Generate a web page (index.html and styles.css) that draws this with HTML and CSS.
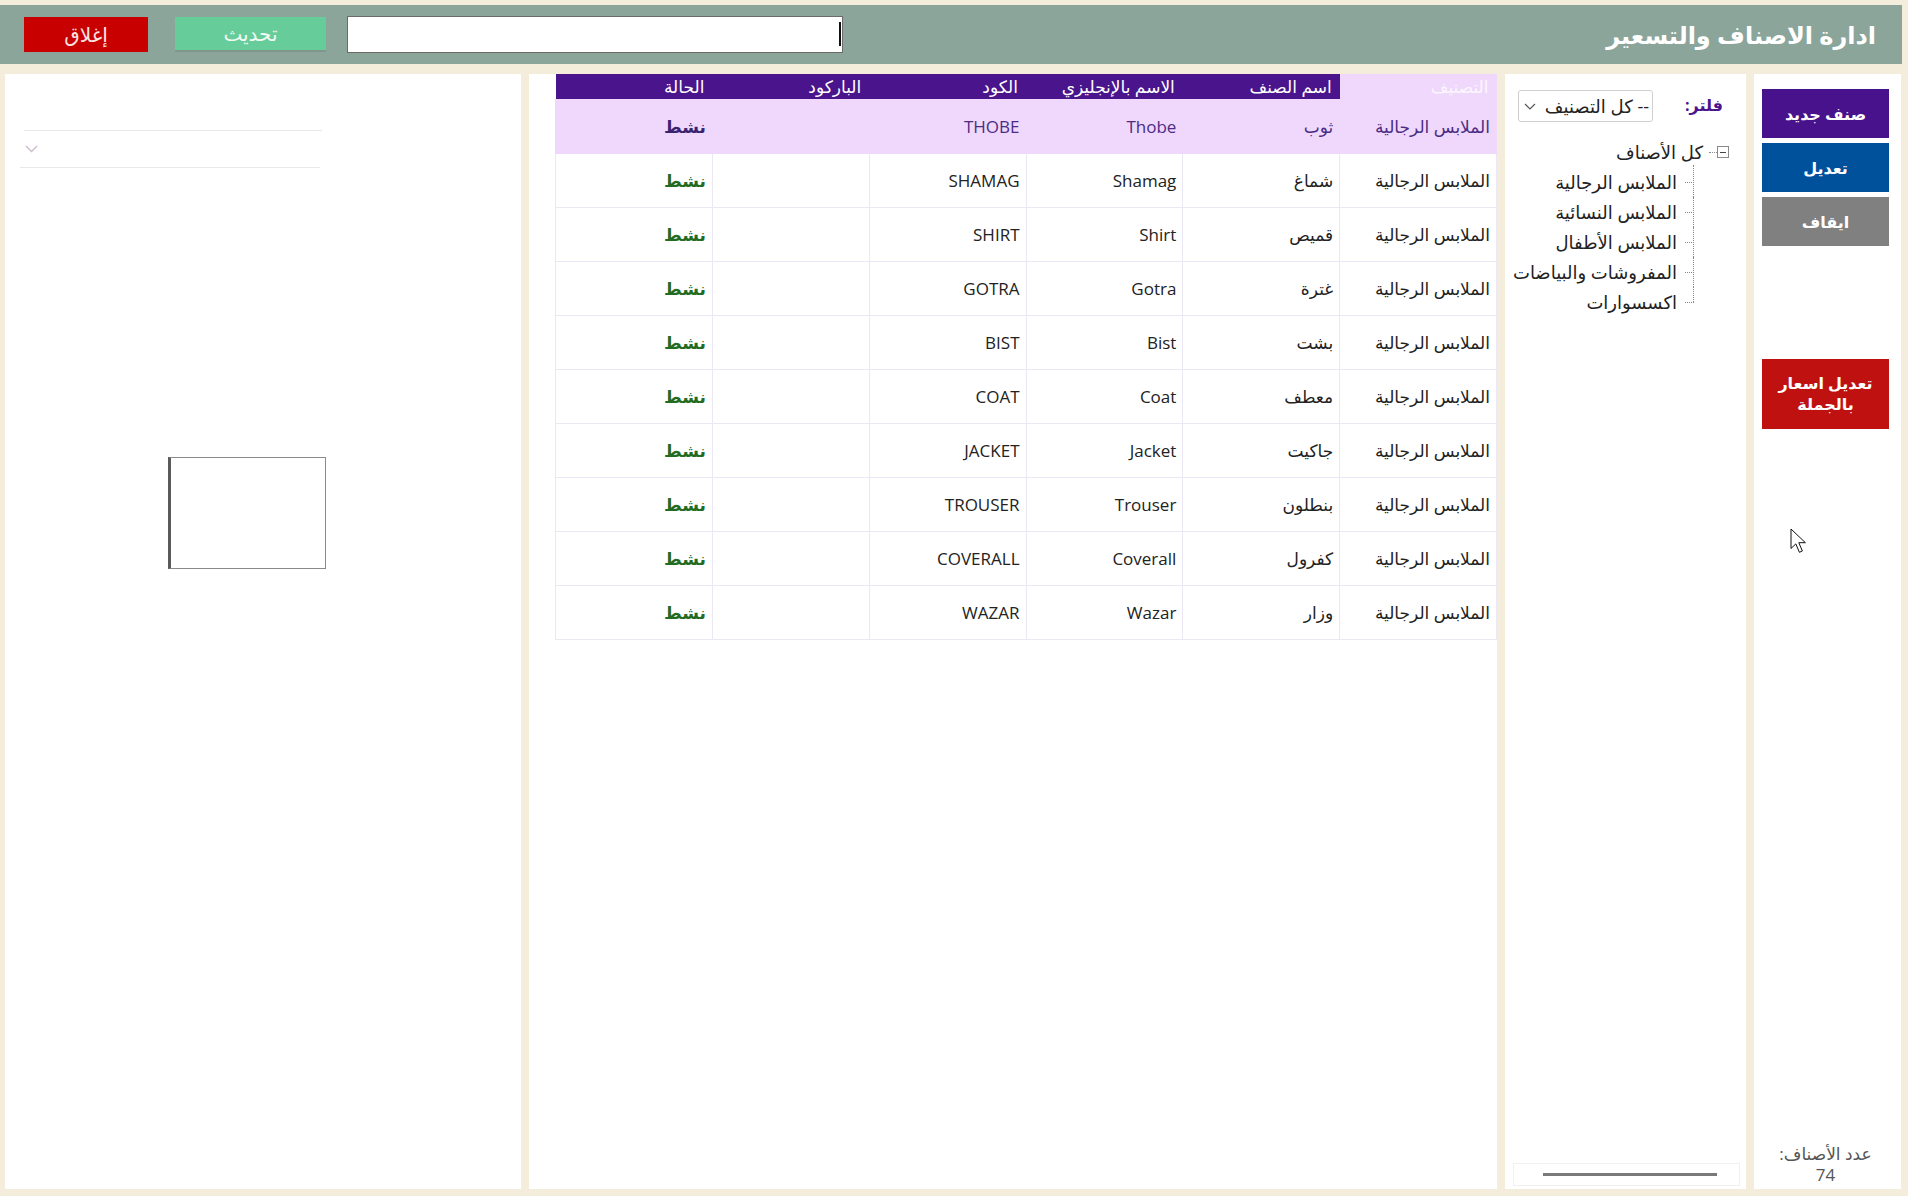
FILE: index.html
```html
<!DOCTYPE html>
<html lang="ar">
<head>
  <meta charset="UTF-8" />
  <title>ادارة الاصناف والتسعير</title>
  <link rel="stylesheet" href="styles.css">
</head>
<body>

<header class="topbar">
  <div class="tools">
    <button class="btn-close">إغلاق</button>
    <button class="btn-refresh">تحديث</button>
    <div class="search"><span class="caret"></span></div>
  </div>
  <h1 class="title">ادارة الاصناف والتسعير</h1>
</header>

<div class="main">

  <!-- بطاقة الصنف + الصورة -->
  <section class="panel preview">
    <div class="pv-line top"></div>
    <div class="pv-combo">
      <svg width="13" height="8" viewBox="0 0 13 8"><path d="M1 1l5.5 5.5L12 1" fill="none" stroke="#c7bcc8" stroke-width="1.3"/></svg>
    </div>
    <div class="pv-line bottom"></div>
    <div class="photo"></div>
  </section>

  <!-- جدول الاصناف -->
  <section class="panel grid-panel">
    <table class="items" dir="rtl">
      <thead>
        <tr>
          <th class="sel">التصنيف</th>
          <th>اسم الصنف</th>
          <th>الاسم بالإنجليزي</th>
          <th>الكود</th>
          <th>الباركود</th>
          <th>الحالة</th>
        </tr>
      </thead>
      <tbody id="rows"></tbody>
    </table>
  </section>

  <!-- شجرة التصنيفات -->
  <section class="panel tree-panel" dir="rtl">
    <div class="filter">
      <label>فلتر:</label>
      <div class="select">
        <span>-- كل التصنيف</span>
        <svg width="12" height="7" viewBox="0 0 12 7"><path d="M1 1l5 5 5-5" fill="none" stroke="#555" stroke-width="1.2"/></svg>
      </div>
    </div>
    <div class="tree">
      <div class="root"><span class="box"></span><span class="dots"></span><span>كل الأصناف</span></div>
      <ul class="children">
        <li>الملابس الرجالية</li>
        <li>الملابس النسائية</li>
        <li>الملابس الأطفال</li>
        <li>المفروشات والبياضات</li>
        <li>اكسسوارات</li>
      </ul>
    </div>
    <div class="hscroll"><span class="thumb"></span></div>
  </section>

  <!-- الاوامر -->
  <section class="panel actions" dir="rtl">
    <button class="act new">صنف جديد</button>
    <button class="act edit">تعديل</button>
    <button class="act stop">ايقاف</button>
    <button class="act bulk">تعديل اسعار<br>بالجملة</button>
    <div class="count">عدد الأصناف:<br>74</div>
  </section>

</div>

<svg class="pointer" width="17" height="26" viewBox="0 0 17 26">
  <path d="M1 1v19.5l4.8-4.6 3.6 8.4 3-1.3-3.6-8.3h6.6z" fill="#fff" stroke="#111" stroke-width="1" stroke-linejoin="round"/>
</svg>

<script>
  const items = [
    ["ثوب", "Thobe", "THOBE"],
    ["شماغ", "Shamag", "SHAMAG"],
    ["قميص", "Shirt", "SHIRT"],
    ["غترة", "Gotra", "GOTRA"],
    ["بشت", "Bist", "BIST"],
    ["معطف", "Coat", "COAT"],
    ["جاكيت", "Jacket", "JACKET"],
    ["بنطلون", "Trouser", "TROUSER"],
    ["كفرول", "Coverall", "COVERALL"],
    ["وزار", "Wazar", "WAZAR"]
  ];

  const tbody = document.getElementById("rows");
  items.forEach((item, i) => {
    tbody.innerHTML += `
      <tr class="${i === 0 ? "sel" : ""}">
        <td>الملابس الرجالية</td>
        <td>${item[0]}</td>
        <td>${item[1]}</td>
        <td>${item[2]}</td>
        <td></td>
        <td class="status">نشط</td>
      </tr>
    `;
  });
</script>

</body>
</html>
```

FILE: styles.css
```css
* {
  box-sizing: border-box;
}
body {
  margin: 0;
  height: 1196px;
  overflow: hidden;
  background: #f4eddc;
  font-family: "Open Sans", "DejaVu Sans", sans-serif;
  position: relative;
}
button {
  font-family: inherit;
  cursor: pointer;
}

/* شريط العنوان */
.topbar {
  display: flex;
  align-items: center;
  height: 59px;
  margin: 5px 6px 0 0;
  background: #8ca59b;
}
.tools {
  display: flex;
  align-items: center;
  padding-left: 24px;
}
.btn-close {
  width: 124px;
  height: 35px;
  background: #c80000;
  color: #fbe4e4;
  border: none;
  font-size: 20px;
}
.btn-refresh {
  width: 151px;
  height: 35px;
  margin-left: 27px;
  background: #66cc99;
  color: #f0fbf4;
  border: none;
  border-bottom: 2px solid #7e968c;
  font-size: 20px;
}
.search {
  width: 496px;
  height: 37px;
  margin-left: 21px;
  background: #fff;
  border: 1px solid #6b6b6b;
  position: relative;
}
.search .caret {
  position: absolute;
  right: 1px;
  top: 5px;
  width: 2px;
  height: 24px;
  background: #111;
}
.title {
  margin: 0 26px 0 auto;
  color: #fff;
  font-size: 24px;
  font-weight: bold;
}

/* المحتوى */
.main {
  display: flex;
  gap: 8px;
  height: 1132px;
  padding: 10px 6px 7px 5px;
}
.panel {
  background: #fff;
}

.preview {
  width: 516px;
  padding-top: 56px;
}
.pv-line {
  border-top: 1px solid #e9e7ec;
}
.pv-line.top {
  margin-left: 19px;
  width: 298px;
}
.pv-line.bottom {
  margin-left: 15px;
  width: 300px;
}
.pv-combo {
  height: 36px;
  margin-left: 20px;
  display: flex;
  align-items: center;
}
.photo {
  margin: 289px 0 0 163px;
  width: 158px;
  height: 112px;
  border: 1px solid #8a8a8a;
  border-left: 3px solid #5a5a5a;
}

.grid-panel {
  width: 968px;
  display: flex;
  justify-content: flex-end;
  align-items: flex-start;
}
.items {
  width: 942px;
  border-collapse: collapse;
  table-layout: fixed;
}
.items th {
  height: 25px;
  padding: 0 8px;
  background: #4a148c;
  color: #fff;
  font-weight: normal;
  font-size: 17px;
  text-align: right;
}
.items th.sel {
  background: #efd8fb;
  color: #fbf6fe;
}
.items td {
  height: 54px;
  padding: 0 6px;
  text-align: right;
  border: 1px solid #ece7f4;
  font-size: 17px;
  color: #222;
}
.items tr.sel td {
  background: #efd8fb;
  color: #4b2c85;
  border-color: #efd8fb;
}
.items td.status {
  color: #236b1f;
  font-weight: bold;
}
.items tr.sel td.status {
  color: #3a2470;
}

/* الشجرة */
.tree-panel {
  width: 241px;
  display: flex;
  flex-direction: column;
  overflow: hidden;
}
.filter {
  display: flex;
  align-items: center;
  justify-content: space-between;
  padding: 16px 23px 0 13px;
}
.filter label {
  color: #4a148c;
  font-weight: bold;
  font-size: 16px;
  margin-top: -3px;
}
.select {
  width: 135px;
  height: 32px;
  border: 1px solid #cfcfcf;
  border-radius: 3px;
  display: flex;
  align-items: center;
  padding: 0 3px 0 5px;
  font-size: 18px;
  color: #222;
}
.select svg {
  margin-right: auto;
}
.tree {
  margin-top: 15px;
  font-size: 18px;
  color: #222;
  white-space: nowrap;
}
.root {
  height: 30px;
  display: flex;
  align-items: center;
  padding-right: 17px;
}
.root .box {
  width: 12px;
  height: 12px;
  border: 1px solid #8a8a8a;
  display: flex;
  align-items: center;
  justify-content: center;
}
.root .box::after {
  content: "";
  width: 6px;
  border-top: 1px solid #444;
}
.root .dots {
  width: 8px;
  border-top: 1px dotted #888;
  margin-left: 6px;
}
.children {
  list-style: none;
  margin: 0;
  padding: 0 52px 0 0;
}
.children li {
  position: relative;
  height: 30px;
  line-height: 30px;
  padding-right: 17px;
}
.children li::before {
  content: "";
  position: absolute;
  right: 0;
  top: 50%;
  width: 9px;
  border-top: 1px dotted #888;
}
.children li::after {
  content: "";
  position: absolute;
  right: 0;
  top: 0;
  bottom: 0;
  border-right: 1px dotted #888;
}
.children li:first-child::after {
  top: -2px;
}
.children li:last-child::after {
  bottom: 50%;
}
.hscroll {
  margin: auto 6px 3px 8px;
  height: 23px;
  border: 1px solid #f0f0ec;
  display: flex;
  align-items: center;
  padding: 0 22px 0 29px;
}
.hscroll .thumb {
  flex: 1;
  height: 3px;
  background: #7a7a7a;
}

/* الاوامر */
.actions {
  width: 147px;
  display: flex;
  flex-direction: column;
  padding: 15px 12px 4px 8px;
}
.act {
  height: 49px;
  margin-bottom: 5px;
  border: none;
  color: #fff;
  font-weight: bold;
  font-size: 16px;
}
.act.new {
  background: #47128c;
}
.act.edit {
  background: #00519c;
}
.act.stop {
  background: #808080;
}
.act.bulk {
  height: 70px;
  margin-top: 108px;
  background: #c01111;
  line-height: 1.3;
}
.count {
  margin-top: auto;
  text-align: center;
  color: #555;
  font-size: 17px;
  line-height: 21px;
}

.pointer {
  position: absolute;
  left: 1790px;
  top: 528px;
}
```
